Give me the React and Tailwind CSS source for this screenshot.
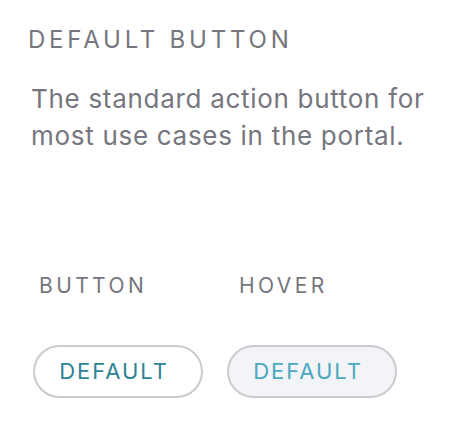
export default function App() {
  return (
    <div className="w-[458px] h-[430px] bg-white" style={{ fontFamily: "Inter, 'Noto Sans', sans-serif" }}>
      <div className="pt-[25px] pl-[28px]">
        <h2 className="text-[24px] leading-[30px] tracking-[3.8px] text-[#76767e] font-normal">DEFAULT BUTTON</h2>
        <p className="mt-[25px] pl-[3px] w-[420px] text-[26px] leading-[37px] tracking-[0.7px] text-[#76767e]">
          The standard action button for most use cases in the portal.
        </p>
        <div className="mt-[119px] pl-[5px] flex gap-[24px]">
          <div className="w-[170px] flex flex-col">
            <div className="pl-[6px] text-[21px] leading-[26px] tracking-[3.4px] text-[#76767e]">BUTTON</div>
            <button className="mt-[46px] h-[53px] w-[170px] pr-[8px] rounded-full border-2 border-[#cbcbcf] bg-white text-[22px] tracking-[2px] text-[#2f8398]">DEFAULT</button>
          </div>
          <div className="w-[170px] flex flex-col">
            <div className="pl-[12px] text-[21px] leading-[26px] tracking-[3.4px] text-[#76767e]">HOVER</div>
            <button className="mt-[46px] h-[53px] w-[170px] pr-[8px] rounded-full border-2 border-[#cbcbcf] bg-[#f3f4f8] text-[22px] tracking-[2px] text-[#4aa9c1]">DEFAULT</button>
          </div>
        </div>
      </div>
    </div>
  );
}
